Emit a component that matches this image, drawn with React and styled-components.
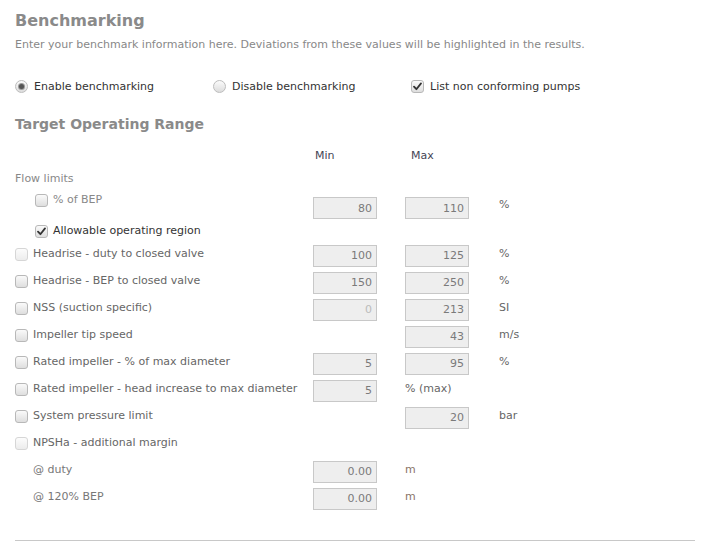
import React from 'react'
import styled, { createGlobalStyle } from 'styled-components'

const Global = createGlobalStyle`
  body {
    margin: 0;
    background: #fff;
    font-family: "DejaVu Sans", Verdana, sans-serif;
    font-size: 11px;
  }
`

const Page = styled.div`
  padding: 0 13px 0 15px;
  width: 708px;
  box-sizing: border-box;
`

const Title = styled.h2`
  margin: 11px 0 0;
  font-size: 16px;
  line-height: 20px;
  font-weight: bold;
  color: #8a8a8a;
`

const Intro = styled.p`
  margin: 6px 0 0;
  line-height: 16px;
  color: #888;
`

const Options = styled.div`
  display: flex;
  margin-top: 25px;
  height: 16px;
  align-items: center;
`

const Option = styled.label`
  width: 198px;
  display: flex;
  align-items: center;
  gap: 6px;
  color: #333;
`

const Radio = styled.span`
  width: 13px;
  height: 13px;
  border-radius: 50%;
  border: 1px solid #bdbdbd;
  background: linear-gradient(#fbfbfb, #dcdcdc);
  display: flex;
  align-items: center;
  justify-content: center;
  box-sizing: border-box;
  &::after {
    content: '';
    width: 5px;
    height: 5px;
    border-radius: 50%;
    background: ${p => (p.$on ? '#555' : 'transparent')};
    box-shadow: ${p => (p.$on ? '0 0 0 1px #9a9a9a' : 'none')};
  }
`

const Box = styled.span`
  width: 13px;
  height: 13px;
  flex: none;
  border-radius: 3px;
  border: 1px solid ${p => (p.$dim ? '#d6d6d6' : '#b8b8b8')};
  background: ${p => (p.$dim ? 'linear-gradient(#fcfcfc, #ececec)' : 'linear-gradient(#fafafa, #dedede)')};
  box-sizing: border-box;
  display: flex;
  align-items: center;
  justify-content: center;
`

const Subtitle = styled.h3`
  margin: 21px 0 0;
  font-size: 14px;
  line-height: 18px;
  font-weight: bold;
  color: #8a8a8a;
`

const Table = styled.div`
  margin-top: 15px;
  display: flex;
  flex-direction: column;
`

const Row = styled.div`
  display: grid;
  grid-template-columns: 298px 92px 94px 1fr;
  height: ${p => p.$h || 27}px;
  margin-top: ${p => p.$gap || 0}px;
  align-items: ${p => (p.$top ? 'start' : 'center')};
`

const Head = styled.div`
  color: #445;
  padding-left: ${p => p.$pad || 0}px;
  line-height: 16px;
`

const Label = styled.div`
  display: flex;
  align-items: center;
  gap: 5px;
  padding-left: ${p => p.$indent || 0}px;
  padding-bottom: ${p => (p.$top ? 0 : 3)}px;
  line-height: 14px;
  color: ${p => p.$color || '#666'};
`

const Field = styled.input`
  width: 64px;
  height: 22px;
  margin-top: ${p => p.$shift || 0}px;
  box-sizing: border-box;
  border: 1px solid #c8c8c8;
  background: #eee;
  text-align: right;
  padding: 0 4px 0 0;
  font: 11px "DejaVu Sans", Verdana, sans-serif;
  color: ${p => (p.$faint ? '#bbb' : '#7a7a7a')};
  outline: none;
`

const Unit = styled.div`
  color: ${p => p.$color || '#666'};
  line-height: 14px;
  padding-bottom: ${p => (p.$top ? 0 : 3)}px;
  margin-top: ${p => p.$shift || 0}px;
`

const Rule = styled.hr`
  margin: 28px 0 0;
  border: 0;
  border-top: 1px solid #c8c8c8;
`

const Check = () => (
  <svg width="9" height="9" viewBox="0 0 9 9">
    <path d="M1 4.6 L3.4 7.2 L8 1.4" fill="none" stroke="#333" strokeWidth="1.8" strokeLinecap="round" strokeLinejoin="round" />
  </svg>
)

const CheckBox = ({ on, dim }) => <Box $dim={dim}>{on && <Check />}</Box>

const rows = [
  { label: 'Headrise - duty to closed valve', min: '100', max: '125', unit: '%', dim: true },
  { label: 'Headrise - BEP to closed valve', min: '150', max: '250', unit: '%' },
  { label: 'NSS (suction specific)', min: '0', faint: true, max: '213', unit: 'SI' },
  { label: 'Impeller tip speed', max: '43', unit: 'm/s' },
  { label: 'Rated impeller - % of max diameter', min: '5', max: '95', unit: '%' },
  { label: 'Rated impeller - head increase to max diameter', min: '5', maxText: '% (max)' },
  { label: 'System pressure limit', max: '20', unit: 'bar' },
  { label: 'NPSHa - additional margin', dim: true },
  { label: '@ duty', sub: true, min: '0.00', maxText: 'm' },
  { label: '@ 120% BEP', sub: true, min: '0.00', maxText: 'm' },
]

export default function App() {
  return (
    <Page>
      <Global />
      <Title>Benchmarking</Title>
      <Intro>Enter your benchmark information here. Deviations from these values will be highlighted in the results.</Intro>

      <Options>
        <Option><Radio $on />Enable benchmarking</Option>
        <Option><Radio />Disable benchmarking</Option>
        <Option><CheckBox on />List non conforming pumps</Option>
      </Options>

      <Subtitle>Target Operating Range</Subtitle>

      <Table>
        <Row $h={16}>
          <div />
          <Head $pad={2}>Min</Head>
          <Head $pad={6}>Max</Head>
        </Row>
        <Row $h={16} $gap={7}>
          <Label $color="#888" $top>Flow limits</Label>
        </Row>
        <Row $h={26} $gap={6} $top>
          <Label $indent={20} $color="#888" $top><CheckBox />% of BEP</Label>
          <div><Field readOnly value="80" $shift={4} /></div>
          <div><Field readOnly value="110" $shift={4} /></div>
          <Unit $top $shift={5}>%</Unit>
        </Row>
        <Row $h={14} $gap={5}>
          <Label $indent={20} $color="#333" $top><CheckBox on />Allowable operating region</Label>
        </Row>
        <div style={{ height: 4 }} />
        {rows.map(r => (
          <Row key={r.label}>
            <Label $indent={r.sub ? 18 : 0} $color={r.sub ? '#777' : '#666'}>
              {!r.sub && <CheckBox dim={r.dim} />}
              {r.label}
            </Label>
            <div>{r.min && <Field readOnly value={r.min} $faint={r.faint} />}</div>
            <div>
              {r.max && <Field readOnly value={r.max} />}
              {r.maxText && <Unit $color={r.sub ? '#8a7468' : '#666'}>{r.maxText}</Unit>}
            </div>
            <Unit>{r.unit}</Unit>
          </Row>
        ))}
      </Table>

      <Rule />
    </Page>
  )
}
